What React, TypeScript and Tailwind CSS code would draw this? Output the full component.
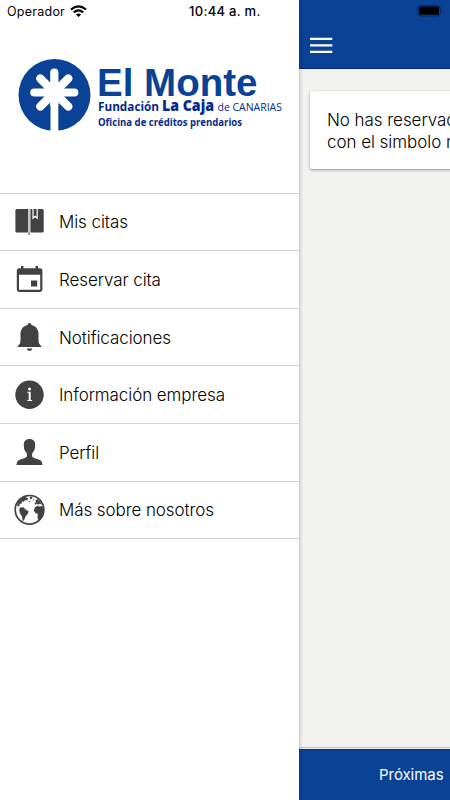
import type { ReactNode } from "react"

const BookIcon = () => (
  <svg viewBox="0.6 1 30 30" className="w-[30px] h-[30px]" fill="#424242">
    <path d="M2.500 3H13.800V26.500H2.500Q1 26.500 1 25V4.500Q1 3 2.500 3Z" />
    <path d="M16 3H18V13.500L20.700 11.200L23.400 13.500V3H28Q29.300 3 29.300 4.500V25Q29.300 26.500 28 26.500H16Z" />
    <path d="M19.200 3H22.200V10.800L20.700 9.500L19.200 10.800Z" />
    <path d="M14 3H15.300V29H14Z" fill="#b5b5b5" />
    <path d="M14 26.500H15.500V29H14Z" fill="#888" />
  </svg>
)

const CalendarIcon = () => (
  <svg viewBox="0 -0.5 30 30" className="w-[30px] h-[30px]" fill="#424242">
    <path
      fillRule="evenodd"
      d="M6 1.500H8.500V3.800H20.500V1.500H23V3.800H25Q27.400 3.800 27.400 6.200V25Q27.400 27.400 25 27.400H4.200Q1.800 27.400 1.800 25V6.200Q1.800 3.800 4.200 3.800H6ZM4 10.300V25.200H25.200V10.300Z"
    />
    <path d="M16 16H22.200V22H16Z" />
  </svg>
)

const BellIcon = () => (
  <svg viewBox="0 0 30 30" className="w-[30px] h-[30px]" fill="#424242">
    <path d="M14.500 1C13.300 1 12.700 1.800 12.600 3C8 4 5.500 7.500 5.500 12V18C5.500 21.500 4.500 22.600 2.600 24.200V25H26.400V24.200C24.500 22.600 23.500 21.500 23.500 18V12C23.500 7.500 21 4 16.400 3C16.300 1.800 15.700 1 14.500 1Z" />
    <path d="M11.700 26.500H17.300C17 28 16 28.800 14.500 28.800S12 28 11.700 26.500Z" />
  </svg>
)

const InfoIcon = () => (
  <svg viewBox="0 0 30 30" className="w-[30px] h-[30px]">
    <circle cx="14.500" cy="14.700" r="14.200" fill="#424242" />
    <circle cx="14.500" cy="9" r="1.500" fill="#fff" />
    <path
      d="M12.300 11.800H15.700V20H17.100V21H12.300V20H13.700V12.800H12.300Z"
      fill="#fff"
    />
  </svg>
)

const PersonIcon = () => (
  <svg viewBox="0 -0.5 30 30" className="w-[30px] h-[30px]" fill="#424242">
    <path d="M14.500 1.500C10.700 1.500 8.600 4 8.800 7.500C8.900 11.500 9.500 13.200 11.600 15.500C12 17 12 18.300 11.700 19.200C10.500 21 5.500 21.300 3.300 23C1.900 24.200 1.700 26 1.500 27.500H27.500C27.300 26 27.100 24.200 25.700 23C23.500 21.300 18.500 21 17.300 19.200C17 18.300 17 17 17.400 15.500C19.500 13.200 20.100 11.500 20.200 7.500C20.400 4 18.300 1.500 14.500 1.500Z" />
  </svg>
)

const EarthIcon = () => (
  <svg
    viewBox="0 0 30 30"
    className="w-[30px] h-[30px] overflow-visible"
    fill="#424242">
    <circle
      cx="14.500"
      cy="14.800"
      r="14.300"
      fill="none"
      stroke="#424242"
      strokeWidth="1.700"
    />
    <path d="M2 10L4 5.500L8 2.300L12.500 1L11 3L13.300 3.200L12.300 5.500L10.300 5L8.800 6.800L6.500 6.600L7 8.600L4.700 8.800L4.500 10.800L3.300 11.800Z" />
    <path d="M4.800 12.500L8.500 12.200L10.200 14.200L13.800 16.500L12.300 19.500L10.500 21.500L9 25.300L7.600 26L7 21.500L5 18.500L4.300 15Z" />
    <path d="M20 12L23 10.800L24.500 11.500L27 11L28.500 13V17.500L26.500 22.500L23.300 25.500L22.600 23L22.700 18.700L20.300 18L18.800 15.500Z" />
    <path d="M19.500 8.500L21 7L20.300 5.500L22.300 4.200L25 6.500L27 9.700L24.800 8.800L23 9.800L21.600 8.600L20.200 10Z" />
    <path d="M14.500 2L17 1.500L17.500 3L15.500 4.500ZM13.500 6.500L15.300 5.800L15 7.500ZM18 4.500L19.200 3.800L19 5.800Z" />
  </svg>
)

interface MenuItem {
  label: string
  icon: ReactNode
}

const menuItems: MenuItem[] = [
  { label: "Mis citas", icon: <BookIcon /> },
  { label: "Reservar cita", icon: <CalendarIcon /> },
  { label: "Notificaciones", icon: <BellIcon /> },
  { label: "Información empresa", icon: <InfoIcon /> },
  { label: "Perfil", icon: <PersonIcon /> },
  { label: "Más sobre nosotros", icon: <EarthIcon /> }
]

const Logo = () => (
  <svg viewBox="0 0 299 100" className="w-[299px] h-[100px]" fill="#0a4296">
    <circle cx="54.500" cy="55" r="36" />
    <g stroke="#fff" strokeWidth="8.200" strokeLinecap="round">
      <path d="M54.300 32.500V64" />
      <path d="M34.300 52.500H74.300" />
      <path d="M40.300 38.500L68.300 66.500" />
      <path d="M68.300 38.500L40.300 66.500" />
    </g>
    <path d="M50.500 56H58.300V92H50.500Z" fill="#fff" />
    <text
      x="97"
      y="56.200"
      textLength="160.500"
      lengthAdjust="spacingAndGlyphs"
      className="font-['Liberation_Sans',sans-serif] text-[38.500px] font-bold">
      El Monte
    </text>
    <g fill="#06298f" className="font-['Open_Sans',sans-serif]">
      <text
        x="98"
        y="71"
        textLength="61"
        lengthAdjust="spacingAndGlyphs"
        className="text-[12.500px] font-bold">
        Fundación
      </text>
      <text
        x="162"
        y="71"
        textLength="52"
        lengthAdjust="spacingAndGlyphs"
        className="text-[15.500px] font-extrabold">
        La Caja
      </text>
      <text
        x="217.500"
        y="71"
        textLength="64.500"
        lengthAdjust="spacingAndGlyphs"
        className="text-[11px]">
        de CANARIAS
      </text>
      <text
        x="98"
        y="85.500"
        textLength="144"
        lengthAdjust="spacingAndGlyphs"
        className="text-[10.500px] font-bold">
        Oficina de créditos prendarios
      </text>
    </g>
  </svg>
)

const StatusBar = () => (
  <div className="h-[24px] relative text-black">
    <div className="flex items-center h-[24px] pl-[7px] gap-[5px]">
      <span className="text-[12.500px] tracking-[0.250px]">Operador</span>
      <svg viewBox="0 0 17 12" className="w-[17px] h-[12px] -mt-[2px]">
        <g fill="none" stroke="#000" strokeWidth="2.200">
          <path d="M1 4.500Q8.500 -1.800 16 4.500" />
          <path d="M3.800 7.400Q8.500 3.500 13.200 7.400" />
        </g>
        <path d="M8.500 12L5.900 9.400Q8.500 7.400 11.100 9.400Z" />
      </svg>
    </div>
    <span className="absolute left-[189px] top-[3px] text-[13px] leading-[17px] font-medium tracking-[0.300px] whitespace-nowrap">
      10:44 a. m.
    </span>
  </div>
)

const SideMenu = () => (
  <aside className="w-[299px] shrink-0 h-full bg-white z-10 shadow-[0_0_4px_rgba(0,0,0,0.350)]">
    <StatusBar />
    <div className="pt-[16px] h-[168.600px]">
      <Logo />
    </div>
    <nav className="border-b border-[#d3d3d3]">
      {menuItems.map(({ label, icon }) => (
        <a
          key={label}
          className="flex items-center gap-[14.200px] h-[57.600px] pl-[14.800px] border-t border-[#d3d3d3] text-[17px] font-light tracking-[-0.080px]">
          {icon}
          <span className="pt-[2.500px]">{label}</span>
        </a>
      ))}
    </nav>
  </aside>
)

const Battery = () => (
  <svg
    viewBox="0 0 27 13"
    className="absolute left-[118px] top-[4px] w-[27px] h-[13px]">
    <rect
      x="0.800"
      y="1.300"
      width="22.500"
      height="10.700"
      rx="2.800"
      fill="none"
      stroke="#07285c"
    />
    <rect x="2" y="2.500" width="20" height="8.300" rx="1.500" />
    <path d="M24.700 5Q26.500 6.500 24.700 8.500Z" fill="#07285c" />
  </svg>
)

const MenuToggle = () => (
  <svg viewBox="0 0 23 17" className="w-[23px] h-[17px]" fill="#fff">
    <path d="M0 0.700H22.300V3.100H0ZM0 7.200H22.300V9.600H0ZM0 13.700H22.300V16.100H0Z" />
  </svg>
)

const Content = () => (
  <main className="flex-1 min-w-0 h-full flex flex-col bg-[#f2f2f1] whitespace-nowrap">
    <header className="relative h-[69px] shrink-0 bg-[#0a4296] border-b border-[#06298f] pt-[37px] pl-[10.500px]">
      <Battery />
      <MenuToggle />
    </header>
    <section className="flex-1 pt-[22px] pl-[11px] overflow-hidden">
      <div className="w-[300px] h-[78px] rounded-[2px] bg-white pt-[18px] pl-[17px] text-[17px] font-light leading-[22px] tracking-[-0.050px] shadow-[0_1px_3px_rgba(0,0,0,0.400)]">
        <p>No has reservado</p>
        <p>con el simbolo más</p>
      </div>
    </section>
    <footer className="h-[53px] shrink-0 border-t border-[#bdbdbd] pt-px">
      <div className="h-[51px] bg-[#0a4296] border-t border-[#06298f] text-white text-[15px] tracking-[-0.050px] flex items-center pl-[80px] pt-px">
        Próximas
      </div>
    </footer>
  </main>
)

const App = () => {
  return (
    <div className="w-[450px] h-[800px] flex overflow-hidden text-black font-[Inter,sans-serif]">
      <SideMenu />
      <Content />
    </div>
  )
}

export default App
